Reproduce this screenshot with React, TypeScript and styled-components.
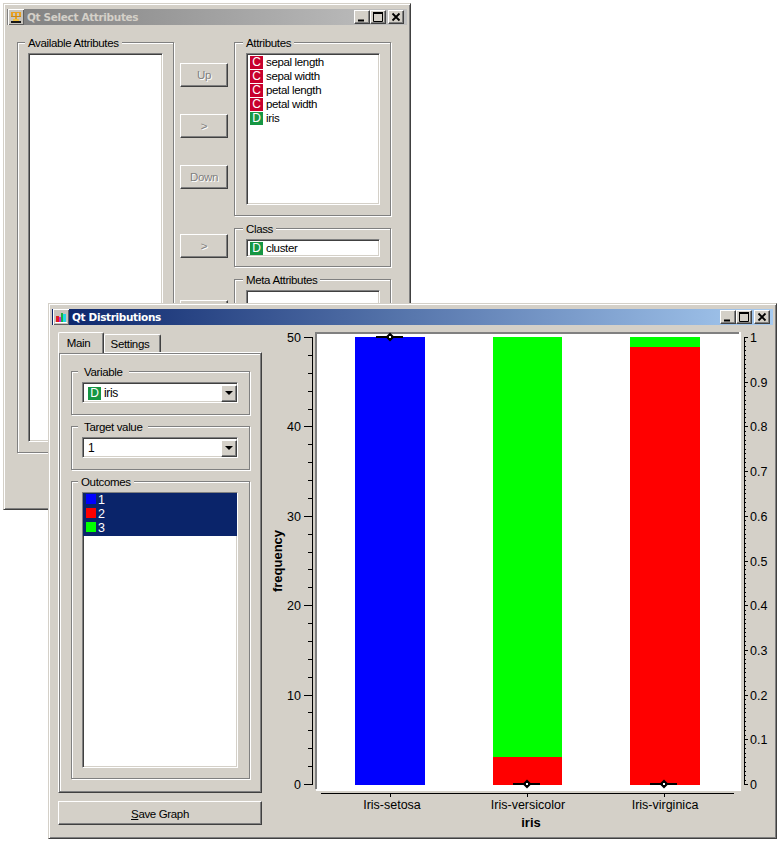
import React from "react";
import styled, { createGlobalStyle } from "styled-components";

const Global = createGlobalStyle`
  html, body { margin: 0; padding: 0; background: #fff; }
  #root { position: relative; width: 778px; height: 841px; overflow: hidden; }
`;

const Page = styled.div`
  position: relative;
  width: 778px;
  height: 841px;
  background: #fff;
  font-family: "Liberation Sans", Arial, sans-serif;
  font-size: 11.5px;
  letter-spacing: -0.35px;
  color: #000;
`;

const Win = styled.div<{ $x: number; $y: number; $w: number; $h: number }>`
  position: absolute;
  left: ${(p) => p.$x}px;
  top: ${(p) => p.$y}px;
  width: ${(p) => p.$w}px;
  height: ${(p) => p.$h}px;
  box-sizing: border-box;
  background: #d4d0c8;
  border-top: 1px solid #d4d0c8;
  border-left: 1px solid #d4d0c8;
  border-right: 1px solid #404040;
  border-bottom: 1px solid #404040;
  box-shadow: inset 1px 1px 0 #fff, inset -1px -1px 0 #808080;
  padding: 5px 3px 0 3px;
  display: flex;
  flex-direction: column;
`;

const TitleBar = styled.div<{ $active?: boolean }>`
  height: 16px;
  flex: none;
  display: flex;
  align-items: center;
  padding: 0 3px 0 1px;
  background: ${(p) =>
    p.$active
      ? "linear-gradient(90deg,#0a246a,#a6caf0)"
      : "linear-gradient(90deg,#808080,#c0c0c0)"};
  color: ${(p) => (p.$active ? "#fff" : "#d4d0c8")};
  font-family: "DejaVu Sans", Verdana, sans-serif;
  font-weight: 700;
  font-size: 10.5px;
  letter-spacing: -0.35px;
`;

const TitleIcon = styled.svg`
  width: 16px;
  height: 16px;
  flex: none;
  margin-right: 3px;
`;

const TitleText = styled.span`
  flex: 1;
  white-space: nowrap;
`;

const CapBtn = styled.div<{ $gap?: number }>`
  width: 16px;
  height: 14px;
  flex: none;
  margin-left: ${(p) => p.$gap ?? 0}px;
  box-sizing: border-box;
  background: #d4d0c8;
  border-top: 1px solid #fff;
  border-left: 1px solid #fff;
  border-right: 1px solid #404040;
  border-bottom: 1px solid #404040;
  box-shadow: inset -1px -1px 0 #808080;
  display: flex;
  align-items: center;
  justify-content: center;
  svg { width: 14px; height: 12px; display: block; }
`;

const SelectBody = styled.div`
  display: grid;
  grid-template-columns: 157px 48px 157px;
  column-gap: 6px;
  padding: 17px 0 0 10px;
  align-items: start;
`;

const Group = styled.div<{ $h: number; $pad?: string; $mt?: number }>`
  position: relative;
  box-sizing: border-box;
  height: ${(p) => p.$h}px;
  margin-top: ${(p) => p.$mt ?? 0}px;
  flex: none;
  border: 1px solid #808080;
  box-shadow: 1px 1px 0 #fff, inset 1px 1px 0 #fff;
  padding: ${(p) => p.$pad ?? "10px 10px 10px 10px"};
  display: flex;
  flex-direction: column;
`;

const Legend = styled.span<{ $x: number; $gap?: number }>`
  position: absolute;
  left: ${(p) => p.$x}px;
  top: -6px;
  background: #d4d0c8;
  padding: 0 ${(p) => p.$gap ?? 3}px;
  line-height: 13px;
  white-space: nowrap;
`;

const Sunken = styled.div<{ $h?: number }>`
  box-sizing: border-box;
  flex: ${(p) => (p.$h ? "none" : "1")};
  height: ${(p) => (p.$h ? `${p.$h}px` : "auto")};
  background: #fff;
  border-top: 1px solid #808080;
  border-left: 1px solid #808080;
  border-right: 1px solid #fff;
  border-bottom: 1px solid #fff;
  box-shadow: inset 1px 1px 0 #404040, inset -1px -1px 0 #d4d0c8;
  padding: 1px 0 0 3px;
`;

const ListRow = styled.div`
  display: flex;
  align-items: center;
  height: 14px;
  white-space: nowrap;
`;

const Badge = styled.span<{ $kind: "C" | "D" }>`
  width: 13px;
  height: 13px;
  margin-right: 3px;
  flex: none;
  display: flex;
  align-items: center;
  justify-content: center;
  color: #fff;
  font-size: 12px;
  letter-spacing: 0;
  background: ${(p) => (p.$kind === "C" ? "#c8002d" : "#169643")};
`;

const BtnCol = styled.div`
  display: flex;
  flex-direction: column;
  padding-top: 21px;
`;

const Btn = styled.div<{ $mt?: number; $w?: string; $h?: number; $pt?: number }>`
  width: ${(p) => p.$w ?? "48px"};
  height: ${(p) => p.$h ?? 24}px;
  margin-top: ${(p) => p.$mt ?? 0}px;
  padding-top: ${(p) => p.$pt ?? 0}px;
  flex: none;
  box-sizing: border-box;
  background: #d4d0c8;
  border-top: 1px solid #fff;
  border-left: 1px solid #fff;
  border-right: 1px solid #404040;
  border-bottom: 1px solid #404040;
  box-shadow: inset -1px -1px 0 #808080;
  display: flex;
  align-items: center;
  justify-content: center;
`;

const Disabled = styled.span`
  color: #808080;
  text-shadow: 1px 1px 0 #fff;
`;

const RightCol = styled.div`
  display: flex;
  flex-direction: column;
`;

const DistBody = styled.div`
  flex: 1;
  display: flex;
  min-height: 0;
`;

const LeftPanel = styled.div`
  width: 204px;
  flex: none;
  margin: 7px 0 0 6px;
  display: flex;
  flex-direction: column;
`;

const TabBar = styled.div`
  display: flex;
  align-items: flex-end;
  height: 20px;
  flex: none;
  position: relative;
  z-index: 1;
`;

const Tab = styled.div<{ $on?: boolean }>`
  box-sizing: border-box;
  width: ${(p) => (p.$on ? 46 : 57)}px;
  height: ${(p) => (p.$on ? 21 : 18)}px;
  margin-bottom: ${(p) => (p.$on ? -1 : 0)}px;
  padding-right: 5px;
  background: #d4d0c8;
  border-top: 1px solid #fff;
  border-left: 1px solid #fff;
  border-right: 1px solid #404040;
  border-top-left-radius: 2px;
  border-top-right-radius: 2px;
  box-shadow: inset -1px 0 0 #808080;
  display: flex;
  align-items: center;
  justify-content: center;
`;

const TabPane = styled.div`
  box-sizing: border-box;
  height: 441px;
  flex: none;
  border-top: 1px solid #fff;
  border-left: 1px solid #fff;
  border-right: 1px solid #404040;
  border-bottom: 1px solid #404040;
  box-shadow: inset -1px -1px 0 #808080, inset 1px 1px 0 #808080, inset 2px 2px 0 #fff;
  padding: 18px 11px 0 12px;
  display: flex;
  flex-direction: column;
  gap: 11px;
`;

const Combo = styled.div`
  box-sizing: border-box;
  height: 21px;
  flex: none;
  background: #fff;
  border-top: 1px solid #808080;
  border-left: 1px solid #808080;
  border-right: 1px solid #fff;
  border-bottom: 1px solid #fff;
  box-shadow: inset 1px 1px 0 #404040, inset -1px -1px 0 #d4d0c8;
  padding: 2px 0 1px 5px;
  display: flex;
  align-items: center;
`;

const ComboText = styled.span`
  flex: 1;
  display: flex;
  align-items: center;
  font-size: 12px;
`;

const ComboBtn = styled.div`
  width: 16px;
  height: 17px;
  box-sizing: border-box;
  background: #d4d0c8;
  border-top: 1px solid #fff;
  border-left: 1px solid #fff;
  border-right: 1px solid #404040;
  border-bottom: 1px solid #404040;
  box-shadow: inset -1px -1px 0 #808080;
  display: flex;
  align-items: center;
  justify-content: center;
  &::after {
    content: "";
    border-left: 4px solid transparent;
    border-right: 4px solid transparent;
    border-top: 4px solid #000;
  }
`;

const OutcomeList = styled(Sunken)`
  padding: 0;
`;

const OutcomeSel = styled.div`
  background: #0a246a;
  padding: 0 0 1px 0;
`;

const OutcomeRow = styled.div`
  height: 14px;
  display: flex;
  align-items: center;
  color: #fff;
  padding-left: 3px;
  font-size: 12.5px;
  letter-spacing: 0;
`;

const Swatch = styled.span<{ $c: string }>`
  width: 10px;
  height: 10px;
  margin: -2px 2px 0 0;
  background: ${(p) => p.$c};
  flex: none;
`;

const ChartSvg = styled.svg`
  position: absolute;
  left: 0;
  top: 0;
  display: block;
  font-family: "Liberation Sans", Arial, sans-serif;
  font-size: 12.5px;
  letter-spacing: 0;
`;

function Mark({ x, y }: { x: number; y: number }) {
  return (
    <g>
      <rect x={x - 14} y={y - 1} width={27} height={2} fill="#000" />
      <path d={`M${x} ${y - 4.5}L${x + 4.5} ${y}L${x} ${y + 4.5}L${x - 4.5} ${y}Z`} fill="#000" />
      <rect x={x - 1} y={y - 1} width={2} height={2} fill="#fff" />
    </g>
  );
}

function Chart() {
  const left: React.ReactNode[] = [];
  for (let v = 0; v <= 50; v += 2) {
    const y = Math.round(784 - v * 8.94) + 0.5;
    const major = v % 10 === 0;
    left.push(<line key={v} x1={major ? 304 : 308} x2={312} y1={y} y2={y} stroke="#000" />);
    if (major)
      left.push(
        <text key={"t" + v} x={301} y={y + 4.5} textAnchor="end">
          {v}
        </text>
      );
  }
  const right: React.ReactNode[] = [];
  for (let i = 0; i <= 100; i += 1) {
    const y = Math.round(784 - i * 4.47) + 0.5;
    const major = i % 10 === 0;
    right.push(<line key={i} x1={744} x2={major ? 748 : 746} y1={y} y2={y} stroke="#000" />);
    if (major)
      right.push(
        <text key={"t" + i} x={750} y={y + 4.5}>
          {i === 0 ? "0" : i === 100 ? "1" : (i / 100).toFixed(1)}
        </text>
      );
  }
  return (
    <ChartSvg width={778} height={841} viewBox="0 0 778 841">
      <rect x={316} y={332} width={425} height={459} fill="#fff" />
      <rect x={315} y={332} width={424} height={2} fill="#808080" />
      <rect x={315} y={332} width={2} height={457} fill="#808080" />
      <rect x={355} y={337} width={70} height={448} fill="#0000ff" />
      <rect x={493} y={337} width={69} height={420} fill="#00ff00" />
      <rect x={493} y={757} width={69} height={28} fill="#ff0000" />
      <rect x={630} y={337} width={70} height={10} fill="#00ff00" />
      <rect x={630} y={347} width={70} height={438} fill="#ff0000" />
      <Mark x={390} y={337} />
      <Mark x={527} y={784} />
      <Mark x={664} y={784} />
      <line x1={312.5} x2={312.5} y1={337} y2={785} stroke="#000" />
      {left}
      <line x1={744.5} x2={744.5} y1={337} y2={785} stroke="#000" />
      {right}
      <line x1={321} x2={734} y1={793.5} y2={793.5} stroke="#000" />
      {[390, 527, 664].map((x, i) => (
        <g key={x}>
          <line x1={x + 0.5} x2={x + 0.5} y1={793} y2={797} stroke="#000" />
          <text x={[392, 528, 665][i]} y={809} textAnchor="middle">
            {["Iris-setosa", "Iris-versicolor", "Iris-virginica"][i]}
          </text>
        </g>
      ))}
      <text x={531} y={827} textAnchor="middle" fontWeight="700" fontSize={13}>
        iris
      </text>
      <text
        transform="translate(282 561) rotate(-90)"
        textAnchor="middle"
        fontWeight="700"
        fontSize={13}
      >
        frequency
      </text>
    </ChartSvg>
  );
}

function Caps() {
  return (
    <>
      <CapBtn>
        <svg viewBox="0 0 14 12">
          <rect x="3" y="8.5" width="6" height="2" fill="#000" />
        </svg>
      </CapBtn>
      <CapBtn>
        <svg viewBox="0 0 14 12">
          <path d="M2.5 2.5h9v8h-9z" fill="none" stroke="#000" />
          <rect x="2" y="1" width="10" height="2" fill="#000" />
        </svg>
      </CapBtn>
      <CapBtn $gap={2}>
        <svg viewBox="0 0 14 12">
          <path d="M3.5 2.5L10.5 9.5M10.5 2.5L3.5 9.5" stroke="#000" strokeWidth="1.8" />
        </svg>
      </CapBtn>
    </>
  );
}

function Row({ k, t }: { k: "C" | "D"; t: string }) {
  return (
    <ListRow>
      <Badge $kind={k}>{k}</Badge>
      {t}
    </ListRow>
  );
}

function IconFrame() {
  return (
    <>
      <rect width="16" height="16" fill="#c8c4bc" />
      <path d="M0 0h16v1H1v15H0z" fill="#fff" />
      <path d="M15 1h1v15H1v-1h14z" fill="#606060" />
    </>
  );
}

export default function App() {
  return (
    <Page>
      <Global />
      <Win $x={3} $y={3} $w={408} $h={507}>
        <TitleBar>
          <TitleIcon viewBox="0 0 16 16">
            <IconFrame />
            <path d="M3 3h10v1H3zM3 4h2v3H3zM7 4h2v7H7zM11 4h2v3h-2z" fill="#e8a020" />
            <path d="M3 7h10v1H3z" fill="#c88818" />
            <path d="M5 10h6v2H5z" fill="#f0c040" />
            <path d="M3 12h10v2H3z" fill="#181818" />
          </TitleIcon>
          <TitleText>Qt Select Attributes</TitleText>
          <Caps />
        </TitleBar>
        <SelectBody>
          <Group $h={411}>
            <Legend $x={7}>Available Attributes</Legend>
            <Sunken />
          </Group>
          <BtnCol>
            <Btn><Disabled>Up</Disabled></Btn>
            <Btn $mt={27}><Disabled>&gt;</Disabled></Btn>
            <Btn $mt={27}><Disabled>Down</Disabled></Btn>
            <Btn $mt={45}><Disabled>&gt;</Disabled></Btn>
            <Btn $mt={42}><Disabled>&lt;</Disabled></Btn>
          </BtnCol>
          <RightCol>
            <Group $h={174} $pad="10px 10px 10px 11px">
              <Legend $x={8}>Attributes</Legend>
              <Sunken>
                <Row k="C" t="sepal length" />
                <Row k="C" t="sepal width" />
                <Row k="C" t="petal length" />
                <Row k="C" t="petal width" />
                <Row k="D" t="iris" />
              </Sunken>
            </Group>
            <Group $h={39} $mt={12} $pad="10px 10px 10px 11px">
              <Legend $x={8}>Class</Legend>
              <Sunken $h={18}>
                <Row k="D" t="cluster" />
              </Sunken>
            </Group>
            <Group $h={120} $mt={12} $pad="10px 10px 10px 11px">
              <Legend $x={8}>Meta Attributes</Legend>
              <Sunken />
            </Group>
          </RightCol>
        </SelectBody>
      </Win>
      <Win $x={48} $y={303} $w={729} $h={536}>
        <TitleBar $active>
          <TitleIcon viewBox="0 0 16 16">
            <IconFrame />
            <rect x="2" y="13" width="12" height="1" fill="#fff" />
            <rect x="3" y="7" width="3" height="6" fill="#e02020" />
            <rect x="6" y="8" width="2" height="5" fill="#d020d0" />
            <rect x="8" y="4" width="2" height="9" fill="#20b040" />
            <rect x="10" y="5" width="3" height="8" fill="#20d8e8" />
          </TitleIcon>
          <TitleText>Qt Distributions</TitleText>
          <Caps />
        </TitleBar>
        <DistBody>
          <LeftPanel>
            <TabBar>
              <Tab $on>Main</Tab>
              <Tab>Settings</Tab>
            </TabBar>
            <TabPane>
              <Group $h={44} $pad="10px 11px 0 10px">
                <Legend $x={6} $gap={6}>Variable</Legend>
                <Combo>
                  <ComboText>
                    <Badge $kind="D">D</Badge>iris
                  </ComboText>
                  <ComboBtn />
                </Combo>
              </Group>
              <Group $h={44} $pad="10px 11px 0 10px">
                <Legend $x={6} $gap={6}>Target value</Legend>
                <Combo>
                  <ComboText>1</ComboText>
                  <ComboBtn />
                </Combo>
              </Group>
              <Group $h={298} $pad="10px 11px 10px 10px">
                <Legend $x={6} $gap={3}>Outcomes</Legend>
                <OutcomeList>
                  <OutcomeSel>
                    <OutcomeRow><Swatch $c="#0000ff" />1</OutcomeRow>
                    <OutcomeRow><Swatch $c="#ff0000" />2</OutcomeRow>
                    <OutcomeRow><Swatch $c="#00ff00" />3</OutcomeRow>
                  </OutcomeSel>
                </OutcomeList>
              </Group>
            </TabPane>
            <Btn $w="204px" $h={24} $mt={8} $pt={2}>
              <span><u>S</u>ave Graph</span>
            </Btn>
          </LeftPanel>
        </DistBody>
      </Win>
      <Chart />
    </Page>
  );
}
